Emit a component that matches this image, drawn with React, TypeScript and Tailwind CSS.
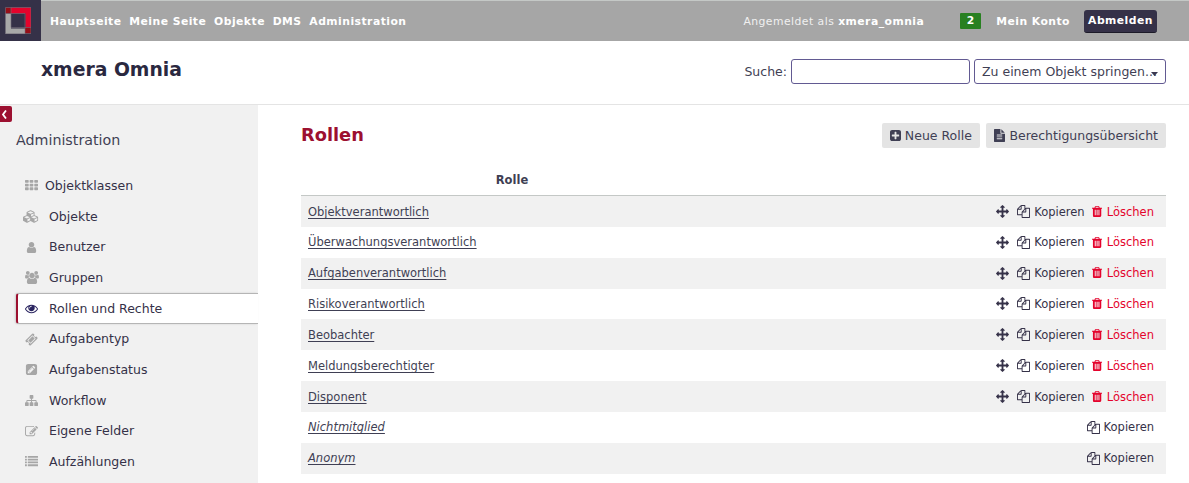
import React from "react";

type Glyph = { d: string; box?: string; flip?: boolean };

const box = (x: number, y: number, w: number, h: number, r: number) =>
  `M${x + r} ${y}h${w - 2 * r}q${r} 0 ${r} ${r}v${h - 2 * r}q0 ${r} ${-r} ${r}h${-(w - 2 * r)}q${-r} 0 ${-r} ${-r}v${-(h - 2 * r)}q0 ${-r} ${r} ${-r}z`;

const glyphs: Record<string, Glyph> = {
  grid: {
    d: [256, 768, 1280].map((y) => [0, 640, 1280].map((x) => box(x, y - 128, 512, 384, 90)).join("")).join(""),
  },
  list: {
    d: [128, 512, 896, 1280].map((y) => box(0, y, 256, 256, 32) + box(384, y, 1408, 256, 32)).join(""),
  },
  cubes: {
    box: "0 0 2304 1792",
    d: "M640 1632l384-192v-314l-384 164v342zm-64-454l404-173-404-173-404 173zm1088 454l384-192v-314l-384 164v342zm-64-454l404-173-404-173-404 173zm-448-293l384-165v-266l-384 164v267zm-64-379l441-189-441-189-441 189zm1088 518v416q0 36-19 67t-52 47l-448 224q-25 14-57 14t-57-14l-448-224q-4-2-7-4-2 2-7 4l-448 224q-25 14-57 14t-57-14l-448-224q-33-16-52-47t-19-67v-416q0-38 21.5-70t56.5-48l434-186v-400q0-38 21.5-70t56.5-48l448-192q23-10 50-10t50 10l448 192q35 16 56.5 48t21.5 70v400l434 186q36 16 57 48t21 70z",
  },
  user: {
    d: "M1536 1399q0 109-62.5 187t-150.5 78h-854q-88 0-150.5-78t-62.5-187q0-85 8.5-160.5t31.5-152 58.5-131 94-89 134.5-34.5q131 128 313 128t313-128q76 0 134.5 34.5t94 89 58.5 131 31.5 152 8.5 160.5zm-256-887q0 159-112.5 271.5t-271.5 112.5-271.5-112.5-112.5-271.5 112.5-271.5 271.5-112.5 271.5 112.5 112.5 271.5z",
  },
  users: {
    box: "-64 0 1920 1792",
    d: "M529 896q-162 5-265 128h-134q-82 0-138-40.5t-56-118.5q0-353 124-353 6 0 43.5 21t97.5 42.5 119 21.5q67 0 133-23-5 37-5 66 0 139 81 256zm1071 637q0 120-73 189.5t-194 69.5h-874q-121 0-194-69.5t-73-189.5q0-53 3.5-103.5t14-109 26.5-108.5 43-97.5 62-81 85.5-53.5 111.5-20q10 0 43 21.5t73 48 107 48 135 21.5 135-21.5 107-48 73-48 43-21.5q61 0 111.5 20t85.5 53.5 62 81 43 97.5 26.5 108.5 14 109 3.5 103.5zm-1024-1277q0 106-75 181t-181 75-181-75-75-181 75-181 181-75 181 75 75 181zm704 384q0 159-112.5 271.5t-271.5 112.5-271.5-112.5-112.5-271.5 112.5-271.5 271.5-112.5 271.5 112.5 112.5 271.5zm576 225q0 78-56 118.5t-138 40.5h-134q-103-123-265-128 81-117 81-256 0-29-5-66 66 23 133 23 59 0 119-21.5t97.5-42.5 43.5-21q124 0 124 353zm-128-609q0 106-75 181t-181 75-181-75-75-181 75-181 181-75 181 75 75 181z",
  },
  eye: {
    d: "M1664 960q-152-236-381-353 61 104 61 225 0 185-131.5 316.5t-316.5 131.5-316.5-131.5-131.5-316.5q0-121 61-225-229 117-381 353 133 205 333.5 326.5t434.5 121.5 434.5-121.5 333.5-326.5zm-720-384q0-20-14-34t-34-14q-125 0-214.5 89.5t-89.5 214.5q0 20 14 34t34 14 34-14 14-34q0-86 61-147t147-61q20 0 34-14t14-34zm848 384q0 34-20 69-140 230-376.5 368.5t-499.5 138.5-499.5-139-376.5-368q-20-35-20-69t20-69q140-229 376.5-368t499.5-139 499.5 139 376.5 368q20 35 20 69z",
  },
  ticket: {
    d: "M1024 452l316 316-572 572-316-316zm-211 979l618-618q19-19 19-45t-19-45l-362-362q-18-18-45-18t-45 18l-618 618q-19 19-19 45t19 45l362 362q18 18 45 18t45-18zm889-637l-907 908q-37 37-90.5 37t-90.5-37l-126-125q56-56 56-136t-56-136-136-56-136 56l-125-126q-37-37-37-90.5t37-90.5l907-906q37-37 90.5-37t90.5 37l125 125q-56 56-56 136t56 136 136 56 136-56l126 125q37 37 37 90.5t-37 90.5z",
  },
  penSquare: {
    flip: true,
    d: "M404 428l152 -152l-52 -52h-56v96h-96v56l52 52zM818 818q14 -13 -3 -30l-291 -291q-17 -17 -30 -3q-14 13 3 30l291 291q17 17 30 3zM544 128l544 544l-288 288l-544 -544v-288h288zM1152 736l92 92q28 28 28 68t-28 68l-152 152q-28 28 -68 28t-68 -28l-92 -92zM1536 1120v-960q0 -119 -84.5 -203.5t-203.5 -84.5h-960q-119 0 -203.5 84.5t-84.5 203.5v960q0 119 84.5 203.5t203.5 84.5h960q119 0 203.5 -84.5t84.5 -203.5z",
  },
  sitemap: {
    d: "M1792 1248v320q0 40-28 68t-68 28h-320q-40 0-68-28t-28-68v-320q0-40 28-68t68-28h96v-192h-512v192h96q40 0 68 28t28 68v320q0 40-28 68t-68 28h-320q-40 0-68-28t-28-68v-320q0-40 28-68t68-28h96v-192h-512v192h96q40 0 68 28t28 68v320q0 40-28 68t-68 28h-320q-40 0-68-28t-28-68v-320q0-40 28-68t68-28h96v-192q0-52 38-90t90-38h512v-192h-96q-40 0-68-28t-28-68v-320q0-40 28-68t68-28h320q40 0 68 28t28 68v320q0 40-28 68t-68 28h-96v192h512q52 0 90 38t38 90v192h96q40 0 68 28t28 68z",
  },
  edit: {
    d: "M888 1184l116-116-152-152-116 116v56h96v96h56zm440-720q-16-16-33 1l-350 350q-17 17-1 33t33-1l350-350q17-17 1-33zm80 594v190q0 119-84.5 203.5t-203.5 84.5h-832q-119 0-203.5-84.5t-84.5-203.5v-832q0-119 84.5-203.5t203.5-84.5h832q63 0 117 25 15 7 18 23 3 17-9 29l-49 49q-14 14-32 8-23-6-45-6h-832q-66 0-113 47t-47 113v832q0 66 47 113t113 47h832q66 0 113-47t47-113v-126q0-13 9-22l64-64q15-15 35-7t20 29zm-96-738l288 288-672 672h-288v-288zm444 132l-92 92-288-288 92-92q28-28 68-28t68 28l152 152q28 28 28 68t-28 68z",
  },
  move: {
    d: "M1792 896q0 26-19 45l-256 256q-19 19-45 19t-45-19-19-45v-128h-384v384h128q26 0 45 19t19 45-19 45l-256 256q-19 19-45 19t-45-19l-256-256q-19-19-19-45t19-45 45-19h128v-384h-384v128q0 26-19 45t-45 19-45-19l-256-256q-19-19-19-45t19-45l256-256q19-19 45-19t45 19 19 45v128h384v-384h-128q-26 0-45-19t-19-45 19-45l256-256q19-19 45-19t45 19l256 256q19 19 19 45t-19 45-45 19h-128v384h384v-128q0-26 19-45t45-19 45 19l256 256q19 19 19 45z",
  },
  copy: {
    d: "M1696 384q40 0 68 28t28 68v1216q0 40-28 68t-68 28h-960q-40 0-68-28t-28-68v-288h-544q-40 0-68-28t-28-68v-672q0-40 20-88t48-76l408-408q28-28 76-48t88-20h416q40 0 68 28t28 68v328q68-40 128-40h416zm-544 213l-299 299h299v-299zm-640-384l-299 299h299v-299zm196 647l316-316v-416h-384v416q0 40-28 68t-68 28h-416v640h512v-256q0-40 20-88t48-76zm956 804v-1152h-384v416q0 40-28 68t-68 28h-416v640h896z",
  },
  trash: {
    box: "192 0 1408 1792",
    d: "M704 1376v-704q0-14-9-23t-23-9h-64q-14 0-23 9t-9 23v704q0 14 9 23t23 9h64q14 0 23-9t9-23zm256 0v-704q0-14-9-23t-23-9h-64q-14 0-23 9t-9 23v704q0 14 9 23t23 9h64q14 0 23-9t9-23zm256 0v-704q0-14-9-23t-23-9h-64q-14 0-23 9t-9 23v704q0 14 9 23t23 9h64q14 0 23-9t9-23zm-544-992h448l-48-117q-7-9-17-11h-317q-10 2-17 11zm928 32v64q0 14-9 23t-23 9h-96v948q0 83-47 143.5t-113 60.5h-832q-66 0-113-58.5t-47-141.5v-952h-96q-14 0-23-9t-9-23v-64q0-14 9-23t23-9h309l70-167q15-37 54-63t79-26h320q40 0 79 26t54 63l70 167h309q14 0 23 9t9 23z",
  },
  plus: {
    box: "128 0 1536 1792",
    d: "M1408 960v-128q0-26-19-45t-45-19h-320v-320q0-26-19-45t-45-19h-128q-26 0-45 19t-19 45v320h-320q-26 0-45 19t-19 45v128q0 26 19 45t45 19h320v320q0 26 19 45t45 19h128q26 0 45-19t19-45v-320h320q26 0 45-19t19-45zm256-544v960q0 119-84.5 203.5t-203.5 84.5h-960q-119 0-203.5-84.5t-84.5-203.5v-960q0-119 84.5-203.5t203.5-84.5h960q119 0 203.5 84.5t84.5 203.5z",
  },
  file: {
    box: "128 0 1536 1792",
    d: "M1596 476q14 14 28 36h-472v-472q22 14 36 28zm-476 164h544v1056q0 40-28 68t-68 28h-1344q-40 0-68-28t-28-68v-1600q0-40 28-68t68-28h800v544q0 40 28 68t68 28zm160 736v-64q0-14-9-23t-23-9h-704q-14 0-23 9t-9 23v64q0 14 9 23t23 9h704q14 0 23-9t9-23zm0-256v-64q0-14-9-23t-23-9h-704q-14 0-23 9t-9 23v64q0 14 9 23t23 9h704q14 0 23-9t9-23zm0-256v-64q0-14-9-23t-23-9h-704q-14 0-23 9t-9 23v64q0 14 9 23t23 9h704q14 0 23-9t9-23z",
  },
};

function Icon({ name, className = "" }: { name: string; className?: string }) {
  const g = glyphs[name];
  return (
    <svg viewBox={g.box ?? "0 0 1792 1792"} className={`shrink-0 fill-current ${className}`} aria-hidden="true">
      <path d={g.d} transform={g.flip ? "translate(128 1536) scale(1 -1)" : undefined} />
    </svg>
  );
}

function Logo() {
  return (
    <div className="flex h-[41px] w-[41px] shrink-0 items-start bg-[#353148] pl-[5px] pt-[7px]">
      <svg viewBox="0 0 26 27" className="h-[27px] w-[26px]" aria-hidden="true">
        <path d="M0.5 6.5h5.500v15h14v5.500h-19.500z" fill="#a8a8a8" />
        <path d="M6 0.500h20v20h-5.500v-14h-14.500z" fill="#e4032c" />
        <path d="M0.500 0.500h5.500v6h-5.500zM20 20.500h6v6h-6z" fill="#960f18" />
        <path d="M0.500 0.500h25.500v26h-25.500zM6 6.500h14v14h-14zM6 0.500v6h-5.500M20 26.500v-6h6" fill="none" stroke="#77707c" strokeWidth="0.6" />
      </svg>
    </div>
  );
}

const mainNav = ["Hauptseite", "Meine Seite", "Objekte", "DMS", "Administration"];

const adminNav: { label: string; icon: string; iconClass: string; active?: boolean }[] = [
  { label: "Objektklassen", icon: "grid", iconClass: "ml-[9px] mr-[7px] h-[13px] w-[13px]" },
  { label: "Objekte", icon: "cubes", iconClass: "ml-[7px] mr-[10px] h-[13px] w-4" },
  { label: "Benutzer", icon: "user", iconClass: "ml-[9px] mr-[11px] h-[13px] w-[13px]" },
  { label: "Gruppen", icon: "users", iconClass: "ml-[9px] mr-[10px] h-[13px] w-[14px]" },
  { label: "Rollen und Rechte", icon: "eye", iconClass: "ml-[7px] mr-[11px] h-[13px] w-[13px] text-[#2a2560]", active: true },
  { label: "Aufgabentyp", icon: "ticket", iconClass: "ml-[9px] mr-[11px] h-[13px] w-[13px]" },
  { label: "Aufgabenstatus", icon: "penSquare", iconClass: "ml-[9px] mr-[11px] h-[13px] w-[13px]" },
  { label: "Workflow", icon: "sitemap", iconClass: "ml-[9px] mr-[11px] h-[13px] w-[13px]" },
  { label: "Eigene Felder", icon: "edit", iconClass: "ml-[9px] mr-[11px] h-[13px] w-[13px]" },
  { label: "Aufzählungen", icon: "list", iconClass: "ml-[9px] mr-[11px] h-[13px] w-[13px]" },
];

const roles = [
  { name: "Objektverantwortlich" },
  { name: "Überwachungsverantwortlich" },
  { name: "Aufgabenverantwortlich" },
  { name: "Risikoverantwortlich" },
  { name: "Beobachter" },
  { name: "Meldungsberechtigter" },
  { name: "Disponent" },
  { name: "Nichtmitglied", builtin: true },
  { name: "Anonym", builtin: true },
];

function TopBar() {
  return (
    <div className="flex h-[41px] items-stretch bg-[#a6a6a6] text-[10.8px] font-bold tracking-[0.47px] text-white shadow-[inset_0_1px_0_#c4c8c6]">
      <Logo />
      <nav className="ml-[9px] flex items-center gap-[7.75px] pt-[3px]">
        {mainNav.map((item) => (
          <a key={item}>{item}</a>
        ))}
      </nav>
      <div className="ml-auto mr-8 flex items-center pt-[2px]">
        <span className="pt-px font-normal text-[#f0f0f0]">
          Angemeldet als <b className="font-bold text-white">xmera_omnia</b>
        </span>
        <span className="-mt-[2px] ml-9 flex h-4 w-[21px] items-center justify-center rounded-[1px] bg-[#288021] pt-px">2</span>
        <a className="ml-[15px] pt-px">Mein Konto</a>
        <a className="ml-[14px] flex h-[23px] w-[73px] items-center justify-center rounded-[3px] border-b border-[#1c1a28] bg-[#353148] pt-px">
          Abmelden
        </a>
      </div>
    </div>
  );
}

function Header() {
  return (
    <header className="flex h-16 items-start border-b border-[#e4e4e4] pl-[41px] pr-[23px]">
      <h1 className="mt-[15px] text-[18.8px] font-bold leading-7 text-[#2a2840]">xmera Omnia</h1>
      <div className="ml-auto mt-[18px] flex items-center text-[12.5px]">
        <label className="mr-1 pt-[2px]">Suche:</label>
        <input className="h-[25px] w-[179px] rounded-[3px] border border-[#625a92] bg-white" />
        <div className="ml-1 flex h-[25px] w-[192px] items-center whitespace-nowrap rounded-[3px] border border-[#625a92] pl-[7px]">
          <span className="pt-[2px]">Zu einem Objekt springen...</span>
          <svg viewBox="0 0 7 4" className="-ml-[6px] mt-[4px] h-1 w-[7px] shrink-0 fill-[#3a3850]" aria-hidden="true">
            <path d="M0 0h7L3.5 4z" />
          </svg>
        </div>
      </div>
    </header>
  );
}

function Sidebar() {
  return (
    <aside className="relative w-[258px] shrink-0 bg-[#f1f1f1]">
      <button className="absolute left-0 top-px flex h-4 w-3 items-center rounded-r-[2px] bg-[#9c1030] pl-px">
        <svg viewBox="0 0 6 9" className="h-[9px] w-[6px]" fill="none" stroke="#fff" strokeWidth="1.8" aria-hidden="true">
          <path d="M5 0.500L2 4.500L5 8.500" />
        </svg>
      </button>
      <h3 className="ml-4 h-[65.500px] pt-[25px] text-[14.250px] leading-5">Administration</h3>
      <ul className="text-[12.5px] text-[#353148]">
        {adminNav.map(({ label, icon, iconClass, active }) => (
          <li
            key={label}
            className={
              active
                ? "ml-4 flex h-[30.67px] items-center rounded-l-[3px] border-y border-l-2 border-y-[#b5b5b5] border-l-[#9c1030] bg-white shadow-[-1px_0_2px_rgba(0,0,0,0.15)]"
                : "ml-4 flex h-[30.67px] items-center"
            }
          >
            <Icon name={icon} className={`${iconClass} ${active ? "" : "text-[#a6a6a6]"}`} />
            <span className="pt-px">{label}</span>
          </li>
        ))}
      </ul>
    </aside>
  );
}

function Roles() {
  return (
    <main className="min-w-0 flex-1 pl-[43px] pr-[23px]">
      <div className="flex h-[62px] items-start pt-[18px]">
        <h2 className="text-[17.8px] font-bold leading-6 text-[#9c1030]">Rollen</h2>
        <div className="ml-auto flex gap-1.5 text-[12.5px]">
          <a className="flex h-[25px] items-center rounded-[2px] bg-[#e4e4e4] pl-2 pr-[8.5px]">
            <Icon name="plus" className="mr-1 h-[13px] w-[11px]" />
            <span className="pt-[2px]">Neue Rolle</span>
          </a>
          <a className="flex h-[25px] items-center rounded-[2px] bg-[#e4e4e4] px-2">
            <Icon name="file" className="mr-1 h-[13px] w-[11px]" />
            <span className="pt-[2px]">Berechtigungsübersicht</span>
          </a>
        </div>
      </div>
      <div className="text-[11.5px]">
        <div className="flex h-[29px] items-start border-b border-[#c4c8c6] pt-[5px] font-bold">
          <span className="w-[422px] text-center">Rolle</span>
        </div>
        {roles.map(({ name, builtin }) => (
          <div key={name} className="flex h-[30.85px] items-center pl-[7px] pr-3 pt-[1.5px] odd:bg-white even:bg-[#f1f1f1]">
            <a className={`underline underline-offset-2 [text-decoration-skip-ink:none] ${builtin ? "italic" : ""}`}>{name}</a>
            <div className="ml-auto flex items-center text-[#353148]">
              {!builtin && <Icon name="move" className="-mt-[1.5px] mr-2 h-[13px] w-[13px]" />}
              <Icon name="copy" className="-mt-[1.5px] mr-1 h-[13px] w-[13px]" />
              <a>Kopieren</a>
              {!builtin && (
                <a className="ml-[7px] flex items-center text-[#e4032c]">
                  <Icon name="trash" className="-mt-[2px] mr-[5px] h-[13px] w-[10.2px]" />
                  Löschen
                </a>
              )}
            </div>
          </div>
        ))}
      </div>
    </main>
  );
}

export default function App() {
  return (
    <div className="flex h-[483px] w-[1189px] flex-col overflow-hidden bg-white font-['DejaVu_Sans',sans-serif] text-[#3f3f54]">
      <TopBar />
      <Header />
      <div className="flex min-h-0 flex-1">
        <Sidebar />
        <Roles />
      </div>
    </div>
  );
}
